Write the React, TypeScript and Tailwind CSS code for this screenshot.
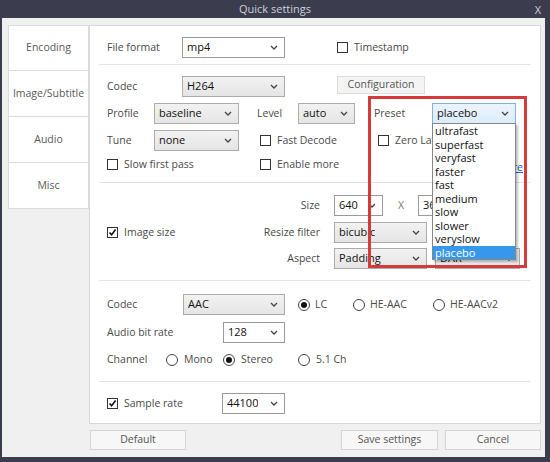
import React from 'react';

type Variant = 'white' | 'gray' | 'blue';

const Chevron: React.FC = () => (
  <svg width="8" height="5" viewBox="0 0 8 5" className="shrink-0">
    <path d="M1 1 L4 4 L7 1" fill="none" stroke="#444" strokeWidth="1.3" />
  </svg>
);

const Select: React.FC<{ value: string; className: string; variant?: Variant }> = ({ value, className, variant = 'gray' }) => {
  const look =
    variant === 'white'
      ? 'bg-white border-[#9a9a9a]'
      : variant === 'blue'
      ? 'bg-gradient-to-b from-[#ecf4fc] to-[#dcecfc] border-[#7eb4ea]'
      : 'bg-gradient-to-b from-[#f2f2f2] to-[#e5e5e5] border-[#acacac]';
  return (
    <div className={`${className} ${look} h-[21px] border flex items-center justify-between pl-[4px] pr-[6px] shrink-0`}>
      <span className="text-[11px] text-[#111] truncate">{value}</span>
      <Chevron />
    </div>
  );
};

const Check: React.FC<{ checked?: boolean }> = ({ checked }) => (
  <div className="w-[11px] h-[11px] border border-[#333] bg-white flex items-center justify-center shrink-0">
    {checked && (
      <svg width="9" height="9" viewBox="0 0 9 9">
        <path d="M1.5 4.5 L3.6 6.8 L7.6 1.6" fill="none" stroke="#111" strokeWidth="1.6" />
      </svg>
    )}
  </div>
);

const Radio: React.FC<{ checked?: boolean }> = ({ checked }) => (
  <div className="w-[12px] h-[12px] rounded-full border border-[#444] bg-white flex items-center justify-center shrink-0">
    {checked && <div className="w-[6px] h-[6px] rounded-full bg-[#111]" />}
  </div>
);

const Sep: React.FC<{ className: string }> = ({ className }) => (
  <div className={`${className} ml-[9px] mr-[10px] h-px bg-[#e3e3e3]`} />
);

const tabs = ['Encoding', 'Image/Subtitle', 'Audio', 'Misc'];
const presets = ['ultrafast', 'superfast', 'veryfast', 'faster', 'fast', 'medium', 'slow', 'slower', 'veryslow', 'placebo'];

export default function App() {
  return (
    <div className="w-[550px] h-[462px] bg-[#3b3d4e] flex flex-col font-['Open_Sans',sans-serif] text-[10.5px] text-[#4a4a4a] overflow-hidden">
      {/* title bar */}
      <div className="h-[18px] relative flex items-center justify-center text-[#cfd0d8] text-[11px]">
        Quick settings
        <span className="absolute right-[9px] top-[2px] text-[11px]">X</span>
      </div>

      {/* body */}
      <div className="relative h-[439px] ml-[2px] mr-[5px] bg-[#f0f0f0] pl-[6px] pt-[7px]">
        <div className="flex">
          {/* tabs */}
          <div className="w-[81px] flex flex-col">
            {tabs.map((t, i) => (
              <div
                key={t}
                className={`${i === 0 ? 'h-[46px]' : 'h-[47px] -mt-px'} border border-[#dcdcdc] bg-white flex items-center justify-center text-[#5a5a5a]`}
              >
                {t}
              </div>
            ))}
          </div>

          {/* panel */}
          <div className="w-[452px] h-[399px] border border-[#d9d9d9] bg-white">
            {/* file format */}
            <div className="pt-[11px] pl-[17px] flex items-center h-[32px]">
              <span className="w-[75px]">File format</span>
              <Select value="mp4" className="w-[103px]" variant="white" />
              <div className="ml-[52px] flex items-center">
                <Check />
                <span className="ml-[6px]">Timestamp</span>
              </div>
            </div>
            <Sep className="mt-[6px]" />

            {/* video codec */}
            <div className="pt-[11px] pl-[17px] flex flex-col">
              <div className="flex items-start h-[21px]">
                <span className="w-[75px] self-center">Codec</span>
                <Select value="H264" className="w-[103px]" />
                <div className="ml-[52px] w-[88px] h-[18px] border border-[#dcdcdc] bg-[#f4f4f4] flex items-center justify-center text-[#555]">
                  Configuration
                </div>
              </div>
              <div className="mt-[6px] flex items-center h-[21px]">
                <span className="w-[47px]">Profile</span>
                <Select value="baseline" className="w-[85px]" />
                <span className="ml-[18px] w-[41px]">Level</span>
                <Select value="auto" className="w-[57px]" />
                <span className="ml-[19px] w-[58px]">Preset</span>
                <Select value="placebo" className="w-[84px]" variant="blue" />
              </div>
              <div className="mt-[6px] flex items-center h-[21px]">
                <span className="w-[47px]">Tune</span>
                <Select value="none" className="w-[85px]" />
                <div className="ml-[21px] w-[118px] flex items-center">
                  <Check />
                  <span className="ml-[6px]">Fast Decode</span>
                </div>
                <div className="w-[54px] flex items-center overflow-hidden whitespace-nowrap">
                  <Check />
                  <span className="ml-[6px]">Zero Latency</span>
                </div>
              </div>
              <div className="mt-[3px] flex items-center h-[21px] pr-[17px]">
                <div className="w-[153px] flex items-center">
                  <Check />
                  <span className="ml-[6px]">Slow first pass</span>
                </div>
                <div className="flex items-center">
                  <Check />
                  <span className="ml-[6px]">Enable more</span>
                </div>
                <span className="ml-auto mt-[6px] text-[#1565c0] underline">More</span>
              </div>
            </div>
            <Sep className="mt-[7px]" />

            {/* image */}
            <div className="pl-[17px] flex flex-col">
              <div className="mt-[12px] flex items-center h-[21px]">
                <span className="w-[213px] text-right">Size</span>
                <Select value="640" className="ml-[14px] w-[49px]" variant="white" />
                <span className="ml-[15px] text-[#777]">X</span>
                <Select value="360" className="ml-[14px] w-[52px]" variant="white" />
              </div>
              <div className="mt-[6px] flex items-center h-[21px]">
                <div className="w-[213px] flex items-center justify-between">
                  <div className="flex items-center">
                    <Check checked />
                    <span className="ml-[6px]">Image size</span>
                  </div>
                  <span>Resize filter</span>
                </div>
                <Select value="bicubic" className="ml-[14px] w-[93px]" />
              </div>
              <div className="mt-[5px] flex items-center h-[21px]">
                <span className="w-[213px] text-right">Aspect</span>
                <Select value="Padding" className="ml-[14px] w-[93px]" />
                <Select value="DAR" className="ml-[8px] w-[85px]" />
              </div>
            </div>
            <Sep className="mt-[11px]" />

            {/* audio */}
            <div className="pl-[17px] flex flex-col">
              <div className="mt-[13px] flex items-center h-[21px]">
                <span className="w-[76px]">Codec</span>
                <Select value="AAC" className="w-[102px]" />
                <div className="ml-[13px] w-[55px] flex items-center">
                  <Radio checked />
                  <span className="ml-[5px]">LC</span>
                </div>
                <div className="w-[80px] flex items-center">
                  <Radio />
                  <span className="ml-[5px]">HE-AAC</span>
                </div>
                <div className="flex items-center">
                  <Radio />
                  <span className="ml-[5px]">HE-AACv2</span>
                </div>
              </div>
              <div className="mt-[7px] flex items-center h-[21px]">
                <span className="w-[116px]">Audio bit rate</span>
                <Select value="128" className="w-[62px]" variant="white" />
              </div>
              <div className="mt-[7px] flex items-center h-[20px]">
                <span className="w-[59px]">Channel</span>
                <div className="w-[57px] flex items-center">
                  <Radio />
                  <span className="ml-[6px]">Mono</span>
                </div>
                <div className="w-[75px] flex items-center">
                  <Radio checked />
                  <span className="ml-[6px]">Stereo</span>
                </div>
                <div className="flex items-center">
                  <Radio />
                  <span className="ml-[6px]">5.1 Ch</span>
                </div>
              </div>
            </div>
            <Sep className="mt-[11px]" />

            {/* sample rate */}
            <div className="pl-[17px] mt-[11px] flex items-center h-[21px]">
              <div className="w-[115px] flex items-center">
                <Check checked />
                <span className="ml-[6px]">Sample rate</span>
              </div>
              <Select value="44100" className="w-[63px]" variant="white" />
            </div>
          </div>
        </div>

        {/* buttons */}
        <div className="mt-[6px] flex items-center h-[20px] pl-[82px]">
          <div className="w-[96px] h-[20px] border border-[#d5d5d5] bg-[#f7f7f7] flex items-center justify-center text-[#555]">Default</div>
          <div className="ml-[155px] w-[97px] h-[20px] border border-[#d5d5d5] bg-[#f7f7f7] flex items-center justify-center text-[#555]">Save settings</div>
          <div className="ml-[7px] w-[96px] h-[20px] border border-[#d5d5d5] bg-[#f7f7f7] flex items-center justify-center text-[#555]">Cancel</div>
        </div>

        {/* open preset list */}
        <div className="absolute left-[430px] top-[105px] w-[84px] border border-[#828790] bg-white shadow-[2px_2px_2px_rgba(0,0,0,0.25)] z-20">
          {presets.map(p => (
            <div
              key={p}
              className={`h-[13.5px] leading-[13.5px] pl-[2px] text-[11px] ${p === 'placebo' ? 'bg-[#3797ea] text-white' : 'text-[#111]'}`}
            >
              {p}
            </div>
          ))}
        </div>

        {/* red highlight */}
        <div className="absolute left-[366px] top-[78px] w-[159px] h-[172px] border-[3px] border-[#d43c3c] z-30 pointer-events-none" />
      </div>
    </div>
  );
}
